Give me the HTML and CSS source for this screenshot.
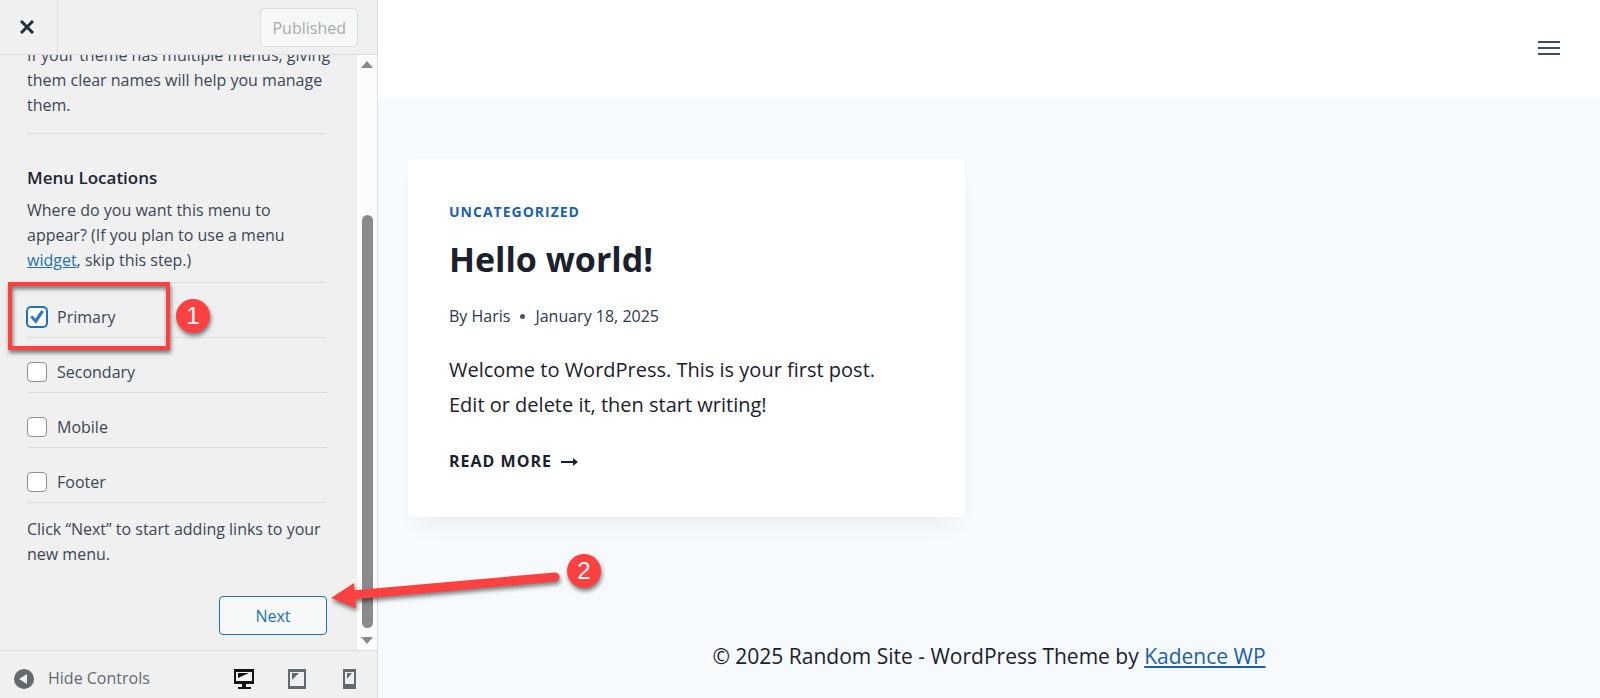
FILE: index.html
```
<!DOCTYPE html>
<html lang="en">

<head>
    <meta charset="UTF-8">
    <meta name="viewport" content="width=device-width, initial-scale=1.0">
    <title>Customize: Random Site</title>
    <link rel="stylesheet" href="styles.css">
</head>

<body>
    <aside class="sidebar">
        <div class="actions">
            <button class="close" aria-label="Close">
                <svg width="14" height="14" viewBox="0 0 14 14"><path d="M1 1L13 13M13 1L1 13" stroke="#1d2f3d" stroke-width="3" fill="none"/></svg>
            </button>
            <button class="published" disabled>Published</button>
        </div>

        <div class="scroll">
            <form class="panel">
                <p class="names">If your theme has multiple menus, giving them clear names will help you manage them.</p>
                <hr>
                <h3>Menu Locations</h3>
                <p>Where do you want this menu to appear? (If you plan to use a menu <a href="#">widget</a>, skip this step.)</p>
                <ul class="locations">
                    <li>
                        <input type="checkbox" id="primary" checked><label for="primary">Primary</label>
                        <span class="highlight"></span>
                        <span class="badge one">1</span>
                    </li>
                    <li><input type="checkbox" id="secondary"><label for="secondary">Secondary</label></li>
                    <li><input type="checkbox" id="mobile"><label for="mobile">Mobile</label></li>
                    <li><input type="checkbox" id="footer"><label for="footer">Footer</label></li>
                </ul>
                <p class="hint">Click “Next” to start adding links to your new menu.</p>
                <button type="button" class="next">Next</button>
            </form>
            <div class="scrollbar">
                <svg width="12" height="7" viewBox="0 0 12 7"><path d="M6 0L12 7H0Z" fill="#8a8a8a"/></svg>
                <div class="thumb"></div>
                <svg width="12" height="7" viewBox="0 0 12 7"><path d="M0 0H12L6 7Z" fill="#8a8a8a"/></svg>
            </div>
        </div>

        <div class="controls">
            <button class="collapse">
                <svg width="20" height="20" viewBox="0 0 20 20"><circle cx="10" cy="10" r="10" fill="#646970"/><path d="M13 5V15L5 10Z" fill="#f0f0f0"/></svg>
                Hide Controls
            </button>
            <div class="devices">
                <button aria-label="Desktop">
                    <svg width="20" height="20" viewBox="0 0 20 20"><path d="M0 0H20V15H12V18H17V20H4V18H8V15H0Z" fill="#111518"/><path d="M2 3H18V12H2Z" fill="#f0f0f0"/><path d="M4 4H15L4 9Z" fill="#111518"/></svg>
                </button>
                <button aria-label="Tablet">
                    <svg width="20" height="20" viewBox="-1 0 20 20"><path d="M0 0H18V20H0Z" fill="#646970"/><path d="M2 3H16V17H2Z" fill="#f0f0f0"/><path d="M4 4H11L4 11Z" fill="#646970"/></svg>
                </button>
                <button aria-label="Mobile">
                    <svg width="20" height="20" viewBox="-3 0 20 20"><path d="M0 0H13V20H0Z" fill="#646970"/><path d="M2 3H11V15H2Z" fill="#f0f0f0"/><path d="M4 4H9L4 10Z" fill="#646970"/></svg>
                </button>
            </div>
        </div>
    </aside>

    <main class="site">
        <header>
            <button class="menu" aria-label="Menu">
                <svg width="22" height="16" viewBox="0 0 22 16"><path d="M0 2H22M0 8H22M0 14H22" stroke="#3f4c61" stroke-width="2"/></svg>
            </button>
        </header>
        <div class="posts">
            <article>
                <a class="category" href="#">UNCATEGORIZED</a>
                <h2>Hello world!</h2>
                <div class="meta"><span>By Haris</span><i></i><span>January 18, 2025</span></div>
                <p>Welcome to WordPress. This is your first post. Edit or delete it, then start writing!</p>
                <a class="more" href="#">READ MORE
                    <svg width="17" height="10" viewBox="0 0 17 10"><path d="M0 5H13" stroke="#1a202c" stroke-width="2"/><path d="M12 1L17 5L12 9Z" fill="#1a202c"/></svg>
                </a>
            </article>
        </div>
        <footer>© 2025 Random Site - WordPress Theme by <a href="#">Kadence WP</a></footer>
    </main>

    <svg class="arrow" width="240" height="50" viewBox="0 0 240 50"><path d="M22 25L225 7" stroke="#fd4141" stroke-width="9" stroke-linecap="round"/><path d="M1 28L24 13L26 38Z" fill="#fd4141"/></svg>
    <span class="badge two">2</span>
</body>

</html>
```

FILE: styles.css
```
* {
    box-sizing: border-box;
}

body {
    margin: 0;
    display: flex;
    height: 100vh;
    overflow: hidden;
    position: relative;
    font-family: "Segoe UI", "Open Sans", sans-serif;
    font-size: 16px;
    line-height: 25px;
    color: #3c434a;
}

button {
    font: inherit;
    border: 0;
    padding: 0;
    background: none;
    cursor: pointer;
}

p, h2, h3, ul {
    margin: 0;
    padding: 0;
}

svg {
    display: block;
}

/* customizer sidebar */
.sidebar {
    flex: 0 0 378px;
    display: flex;
    flex-direction: column;
    background: #f0f0f0;
    border-right: 1px solid #dcdcde;
}

.actions {
    flex: 0 0 55px;
    display: flex;
    align-items: center;
    justify-content: space-between;
    padding-right: 19px;
    border-bottom: 1px solid #dcdcde;
}

.close {
    width: 58px;
    align-self: stretch;
    display: flex;
    align-items: center;
    padding-left: 20px;
    border-right: 1px solid #dcdcde;
}

.published {
    height: 39px;
    padding: 2px 11px 0;
    border: 1px solid #dcdcde;
    border-radius: 4px;
    background: #f6f7f7;
    color: #a7aaad;
}

.scroll {
    flex: 1;
    min-height: 0;
    display: flex;
}

.panel {
    flex: 1;
    overflow: hidden;
    display: flex;
    flex-direction: column;
    justify-content: flex-end;
    padding: 0 30px 15px 27px;
    color: #3c4658;
}

.panel a {
    color: #2271b1;
}

.names {
    margin-right: -20px;
}

hr {
    width: 100%;
    margin: 15px 0 31px;
    border: 0;
    border-top: 1px solid #dcdcde;
}

h3 {
    font-size: 17px;
    font-weight: 600;
    color: #1d2438;
    margin-bottom: 8px;
}

.locations {
    list-style: none;
    border-top: 1px solid #dcdcde;
    margin: 9px 0 14px;
}

.locations li {
    position: relative;
    display: flex;
    align-items: center;
    gap: 10px;
    height: 55px;
    padding-top: 14px;
    border-bottom: 1px solid #dcdcde;
}

input[type="checkbox"] {
    appearance: none;
    width: 20px;
    height: 20px;
    margin: 0;
    border: 1px solid #8c8f94;
    border-radius: 4px;
    background: #fff;
}

input[type="checkbox"]:checked {
    border-color: #2271b1;
    box-shadow: 0 0 0 1px #2271b1;
    display: flex;
    align-items: center;
    justify-content: center;
}

input[type="checkbox"]:checked::before {
    content: "";
    width: 14px;
    height: 14px;
    background: #2a7ac0;
    clip-path: polygon(0 50%, 18% 40%, 38% 62%, 80% 2%, 100% 12%, 42% 98%);
}

.next {
    flex: none;
    align-self: flex-end;
    width: 108px;
    height: 39px;
    margin-top: 29px;
    padding-top: 2px;
    border: 1px solid #2271b1;
    border-radius: 4px;
    background: #f6f7f7;
    color: #2271b1;
}

.scrollbar {
    width: 20px;
    display: flex;
    flex-direction: column;
    align-items: center;
    justify-content: space-between;
    padding: 6px 0;
    background: #fcfcfc;
}

.thumb {
    width: 11px;
    height: 413px;
    margin: auto 0 9px;
    border-radius: 6px;
    background: #8a8a8a;
}

.controls {
    flex: 0 0 48px;
    display: flex;
    align-items: center;
    justify-content: space-between;
    padding: 8px 17px 0 14px;
    border-top: 1px solid #dcdcde;
}

.collapse {
    display: flex;
    align-items: center;
    gap: 14px;
    color: #646970;
}

.devices {
    display: flex;
    gap: 33px;
}

/* site preview */
.site {
    flex: 1;
    background: #f7fafc;
    color: #1a202c;
}

header {
    height: 98px;
    display: flex;
    align-items: center;
    justify-content: flex-end;
    padding: 0 40px 2px 0;
    background: #fff;
}

.posts {
    display: grid;
    grid-template-columns: 1fr 1fr;
    gap: 48px;
    padding: 61px 30px 0;
}

article {
    padding: 41px 41px 43px;
    background: #fff;
    border-radius: 4px;
    box-shadow: 0 15px 25px -10px rgba(0, 0, 0, 0.06);
}

.category {
    display: block;
    font-size: 14px;
    line-height: 24px;
    font-weight: 700;
    letter-spacing: 1px;
    text-decoration: none;
    color: #1a5fb0;
}

h2 {
    margin: 8px 0 18px;
    font-size: 34px;
    line-height: 54px;
    font-weight: 700;
}

.meta {
    display: flex;
    align-items: center;
    gap: 10px;
    margin-bottom: 23px;
    color: #2d3748;
}

.meta i {
    width: 5px;
    height: 5px;
    border-radius: 50%;
    background: #4a5568;
}

article p {
    max-width: 450px;
    font-size: 20px;
    line-height: 35px;
    margin-bottom: 27px;
}

.more {
    display: flex;
    align-items: center;
    gap: 9px;
    font-size: 16px;
    font-weight: 700;
    letter-spacing: 1px;
    text-decoration: none;
    color: #1a202c;
}

footer {
    margin-top: 122px;
    font-size: 21px;
    line-height: 35px;
    text-align: center;
}

footer a {
    color: #1a5fb0;
}

/* callouts */
.highlight {
    position: absolute;
    left: -19px;
    top: -1px;
    width: 162px;
    height: 68px;
    border: 4px solid #fd4141;
    box-shadow: 1px 3px 4px rgba(0, 0, 0, 0.5), inset 1px 3px 4px rgba(0, 0, 0, 0.5);
}

.badge {
    position: absolute;
    width: 34px;
    height: 34px;
    border-radius: 50%;
    background: #fd4141;
    box-shadow: 1px 3px 4px rgba(0, 0, 0, 0.5);
    font-family: "Liberation Sans", sans-serif;
    font-size: 24px;
    line-height: 34px;
    text-align: center;
    color: #fff;
}

.one {
    left: 149px;
    top: 16px;
}

.two {
    left: 567px;
    top: 554px;
}

.arrow {
    position: absolute;
    left: 330px;
    top: 570px;
    filter: drop-shadow(1px 3px 2px rgba(0, 0, 0, 0.5));
}
```
